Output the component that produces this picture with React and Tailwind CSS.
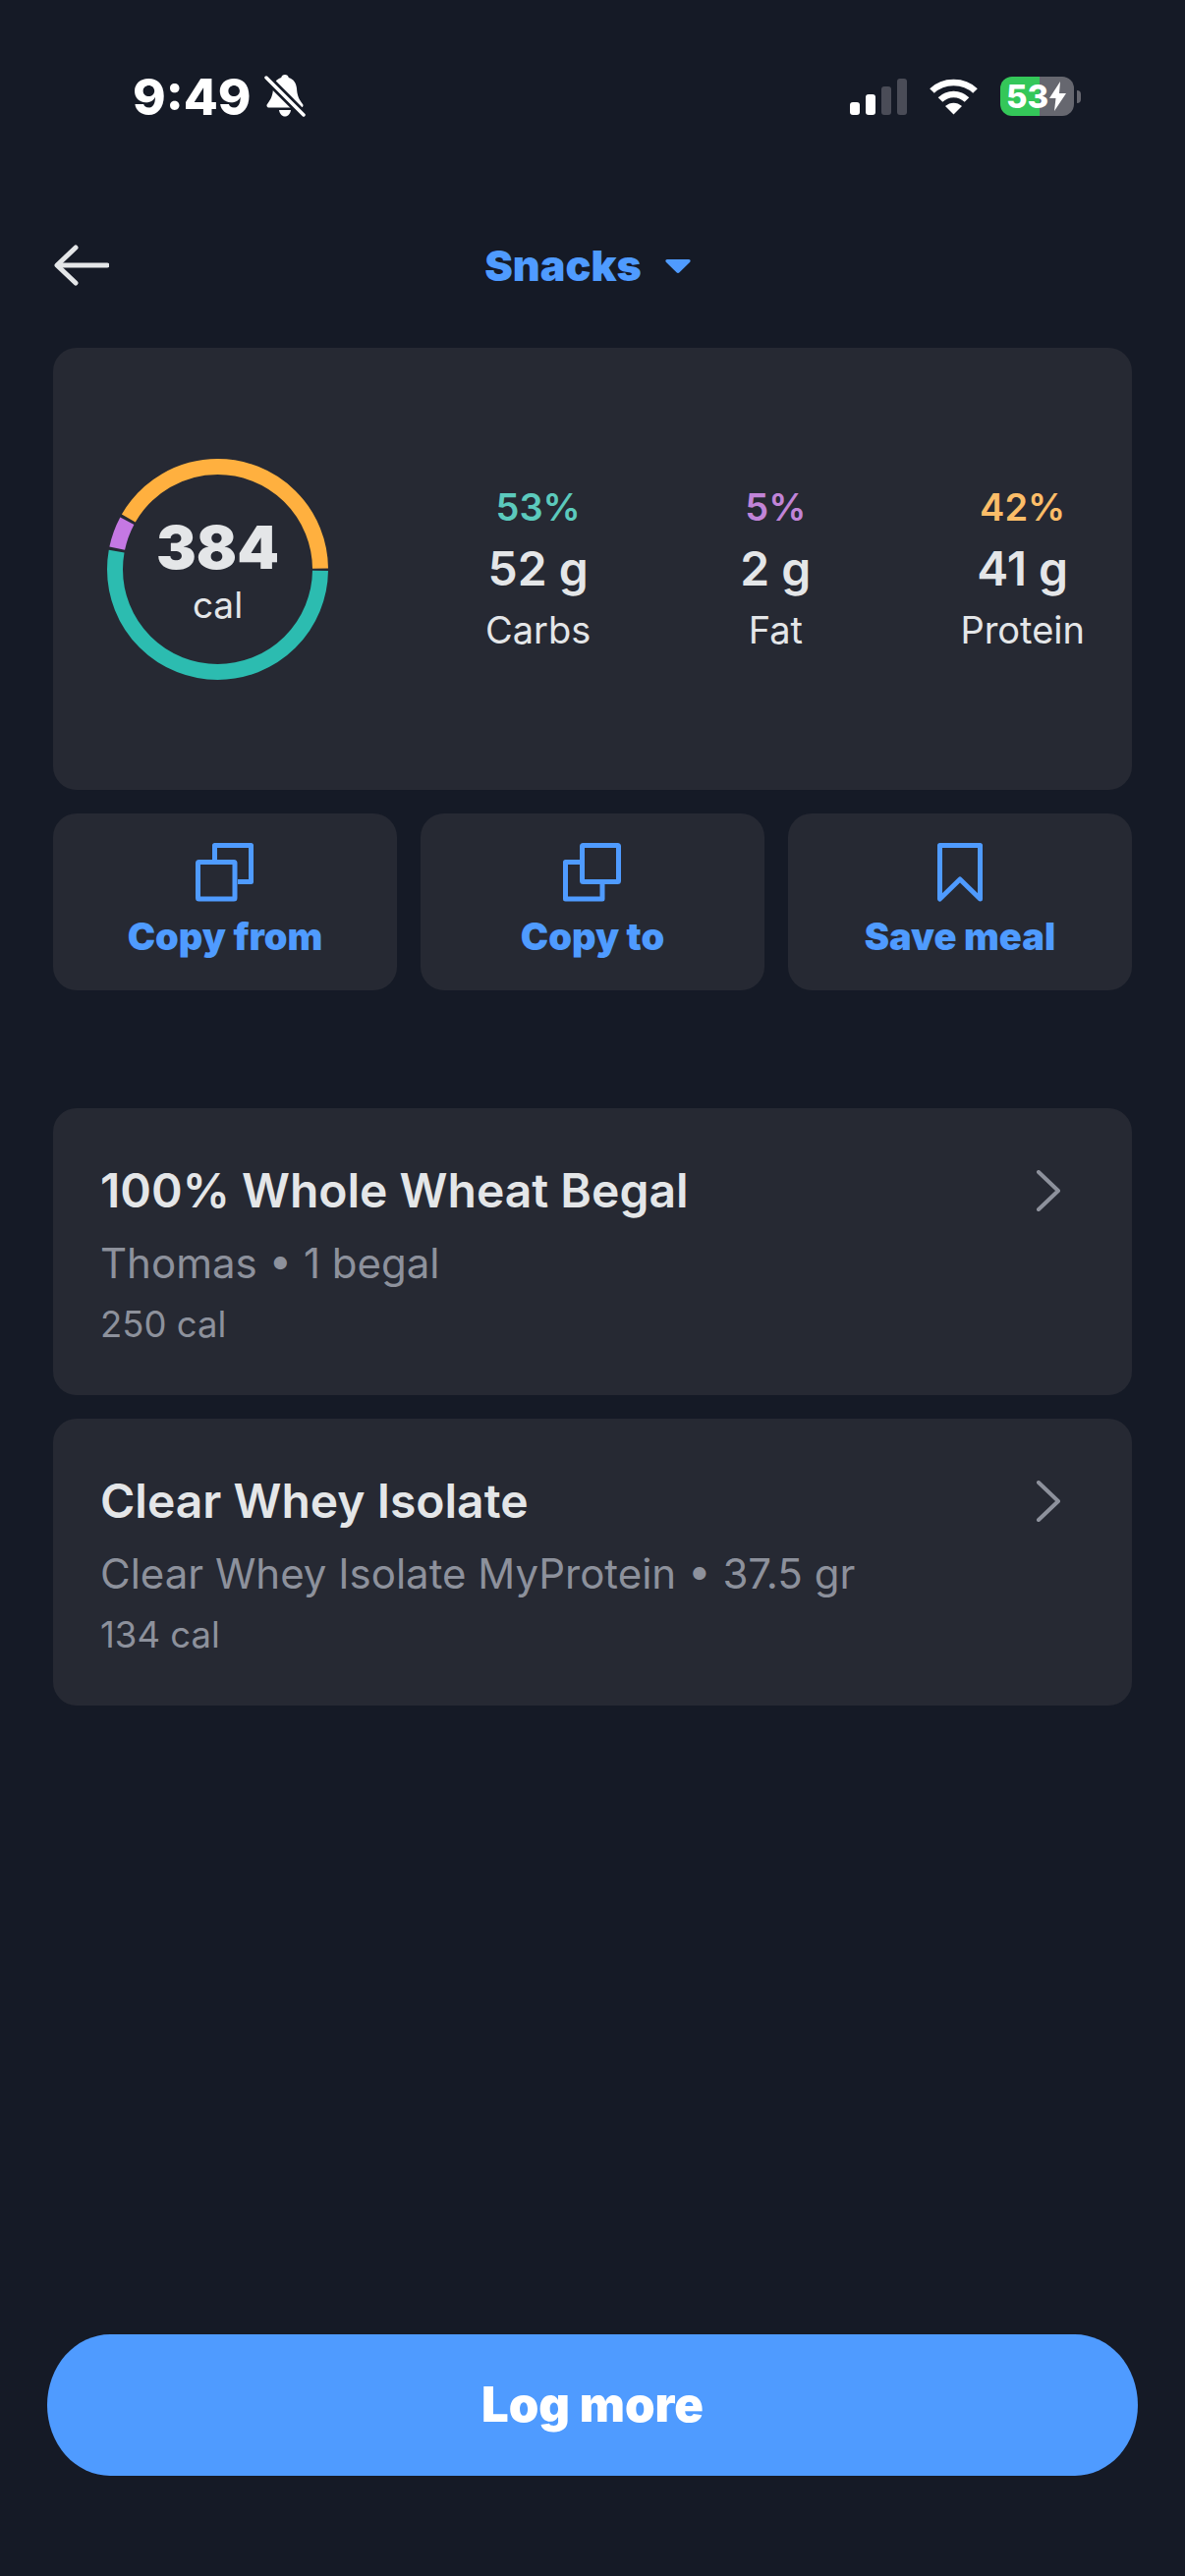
const FONT = 'font-["Inter",sans-serif]'

const MACROS = [
  { pct: '53%', grams: '52 g', label: 'Carbs', color: 'text-[#5ccabd]' },
  { pct: '5%', grams: '2 g', label: 'Fat', color: 'text-[#c184d8]' },
  { pct: '42%', grams: '41 g', label: 'Protein', color: 'text-[#fbbd68]' },
]

const FOODS = [
  { name: '100% Whole Wheat Begal', detail: 'Thomas • 1 begal', cal: '250 cal' },
  { name: 'Clear Whey Isolate', detail: 'Clear Whey Isolate MyProtein • 37.5 gr', cal: '134 cal' },
]

function StatusBar() {
  return (
    <div className="flex h-[44px] items-center justify-between pl-[135px] pr-[106px]">
      <div className="flex items-center gap-[13px]">
        <span className="text-[51px] font-extrabold leading-none text-white">9:49</span>
        <svg width="42" height="44" viewBox="0 0 42 44" fill="white">
          <path d="M21 0c2 0 3.400 1.300 3.800 3 5.200 1.600 7.800 6 8.200 11 .4 6 1.400 10 6 16 1.200 1.600.2 3.500-1.800 3.500H4.800c-2 0-3-1.900-1.800-3.500 4.600-6 5.600-10 6-16 .4-5 3-9.400 8.200-11C17.600 1.300 19 0 21 0z" />
          <path d="M15 36h12c-.6 4-3 6.500-6 6.500S15.600 40 15 36z" />
          <path d="M2 3 40 41" stroke="#151a26" strokeWidth="9" />
          <path d="M2 3 40 41" stroke="white" strokeWidth="3.500" strokeLinecap="round" />
        </svg>
      </div>
      <div className="flex items-center">
        <div className="flex h-[37px] items-end gap-[6px]">
          <div className="h-[13px] w-[10px] rounded-[3px] bg-white" />
          <div className="h-[21px] w-[10px] rounded-[3px] bg-white" />
          <div className="h-[29px] w-[10px] rounded-[3px] bg-[#4a4c57]" />
          <div className="h-[37px] w-[10px] rounded-[3px] bg-[#4a4c57]" />
        </div>
        <svg className="ml-[23px]" width="49" height="37" viewBox="0 0 49 37" fill="none" stroke="white" strokeWidth="6.500">
          <path d="M2.500 12.500C14 1 35 1 46.500 12.500" />
          <path d="M11 21.500c7.500-7.500 19.500-7.500 27 0" />
          <path d="M24.500 36.500 16 28c5-4.500 12-4.500 17 0z" fill="white" stroke="none" />
        </svg>
        <div className="ml-[23px] flex h-[40px] w-[75px] items-center rounded-[12px] bg-[linear-gradient(90deg,#34c759_53%,#66676f_53%)] pl-[6px]">
          <span className="text-[33px] font-extrabold leading-none text-white">53</span>
          <svg className="ml-[1px]" width="17" height="30" viewBox="0 0 17 30" fill="white">
            <path d="M11 0 0 17h6.500L5 30 17 12h-7z" />
          </svg>
        </div>
        <div className="ml-[3px] h-[13px] w-[4px] rounded-r-full bg-[#66676f]" />
      </div>
    </div>
  )
}

function Ring() {
  const r = 104.5
  const c = 2 * Math.PI * r
  const gap = 3
  // teal runs clockwise from 3 o'clock, then fat, then protein
  const segs = [
    { pct: 0.53, stroke: '#2cbcb0' },
    { pct: 0.05, stroke: '#c578e3' },
    { pct: 0.42, stroke: '#ffb03f' },
  ]
  let offset = 0
  return (
    <div className="relative h-[225px] w-[225px] shrink-0">
      <svg width="225" height="225" viewBox="0 0 225 225">
        {segs.map(s => {
          const len = s.pct * c
          const el = (
            <circle
              key={s.stroke}
              cx="112.500"
              cy="112.500"
              r={r}
              fill="none"
              stroke={s.stroke}
              strokeWidth="16"
              strokeDasharray={`${len - gap} ${c - len + gap}`}
              strokeDashoffset={-offset - gap / 2}
            />
          )
          offset += len
          return el
        })}
      </svg>
      <div className="absolute inset-0 flex flex-col items-center justify-center pt-[2px] text-[#e4e6e8]">
        <span className="text-[61px] font-black leading-[64px]">384</span>
        <span className="mt-[7px] text-[37px] leading-[40px]">cal</span>
      </div>
    </div>
  )
}

function ActionButton({ label, children }) {
  return (
    <button className="flex h-[180px] flex-col items-center rounded-[24px] bg-[#262933] pt-[30px] text-[#4f9bff]">
      {children}
      <span className="mt-[13px] text-[38px] font-black leading-[44px]">{label}</span>
    </button>
  )
}

export default function App() {
  return (
    <div className={`${FONT} flex h-[2622px] w-[1206px] flex-col overflow-hidden bg-[#151a26]`}>
      <div className="pt-[76px]">
        <StatusBar />
      </div>

      {/* Nav */}
      <div className="relative mt-[120px] flex h-[60px] items-center justify-center pr-[10px]">
        <svg className="absolute left-[55px] top-[9px]" width="56" height="42" viewBox="0 0 56 42" fill="none" stroke="#e4e6e8" strokeLinecap="round" strokeLinejoin="round" strokeWidth="5">
          <path d="M4 21h50" />
          <path d="M22 3 3 21l19 18" />
        </svg>
        <div className="flex items-center text-[#4f9bff]">
          <span className="text-[43px] font-black leading-none">Snacks</span>
          <svg className="ml-[24px] mt-[2px]" width="26" height="14" viewBox="0 0 26 14" fill="currentColor">
            <path d="M2 0h22c1.500 0 2.200 1.600 1.200 2.700L14.500 13.300c-.8.900-2.200.9-3 0L.8 2.700C-.2 1.600.5 0 2 0z" />
          </svg>
        </div>
      </div>

      <main className="mt-[54px] flex flex-col px-[54px]">
        {/* Summary */}
        <div className="flex h-[450px] items-center rounded-[24px] bg-[#262933] pl-[55px] pr-[48px]">
          <Ring />
          <div className="ml-[160px] flex flex-1 justify-between">
            {MACROS.map(m => (
              <div key={m.label} className="flex flex-col items-center">
                <span className={`text-[38px] font-semibold leading-[40px] ${m.color}`}>{m.pct}</span>
                <span className="mt-[15px] text-[48px] font-semibold leading-[56px] text-[#e4e6e8]">{m.grams}</span>
                <span className="mt-[13px] text-[38px] leading-[42px] text-[#e4e6e8]">{m.label}</span>
              </div>
            ))}
          </div>
        </div>

        {/* Actions */}
        <div className="mt-[24px] grid grid-cols-3 gap-[24px]">
          <ActionButton label="Copy from">
            <svg width="60" height="60" viewBox="0 0 60 60" fill="none" stroke="currentColor" strokeWidth="5" strokeLinejoin="round">
              <path d="M19.500 17V2.500h37v37H43" />
              <rect x="2.500" y="19.500" width="37.500" height="37.500" rx="1" />
            </svg>
          </ActionButton>
          <ActionButton label="Copy to">
            <svg width="60" height="60" viewBox="0 0 60 60" fill="none" stroke="currentColor" strokeWidth="5" strokeLinejoin="round">
              <path d="M17 19.500H2.500V57H40V42" />
              <rect x="19.500" y="2.500" width="37" height="37" rx="1" />
            </svg>
          </ActionButton>
          <ActionButton label="Save meal">
            <svg width="46" height="60" viewBox="0 0 46 60" fill="none" stroke="currentColor" strokeWidth="5" strokeLinejoin="round">
              <path d="M2.500 57V2.500h41V57L23 37z" />
            </svg>
          </ActionButton>
        </div>

        {/* Foods */}
        <div className="mt-[120px] flex flex-col gap-[24px]">
          {FOODS.map(f => (
            <div key={f.name} className="flex h-[292px] items-start justify-between rounded-[24px] bg-[#262933] pl-[48px] pr-[72px] pt-[54px]">
              <div className="flex flex-col">
                <span className="text-[48px] font-semibold leading-[60px] text-[#e4e6e8]">{f.name}</span>
                <span className="mt-[19px] text-[42px] leading-[50px] text-[#8d919c]">{f.detail}</span>
                <span className="mt-[16px] text-[36.500px] leading-[42px] text-[#8d919c]">{f.cal}</span>
              </div>
              <svg className="mt-[9px]" width="26" height="42" viewBox="0 0 26 42" fill="none" stroke="#8d919c" strokeWidth="4" strokeLinecap="round" strokeLinejoin="round">
                <path d="M3 2 23 21 3 40" />
              </svg>
            </div>
          ))}
        </div>
      </main>

      {/* CTA */}
      <button className="mx-[48px] mb-[102px] mt-auto h-[144px] shrink-0 rounded-[64px/72px] bg-[#4f9bff] text-[49px] font-black text-white">
        Log more
      </button>
    </div>
  )
}
